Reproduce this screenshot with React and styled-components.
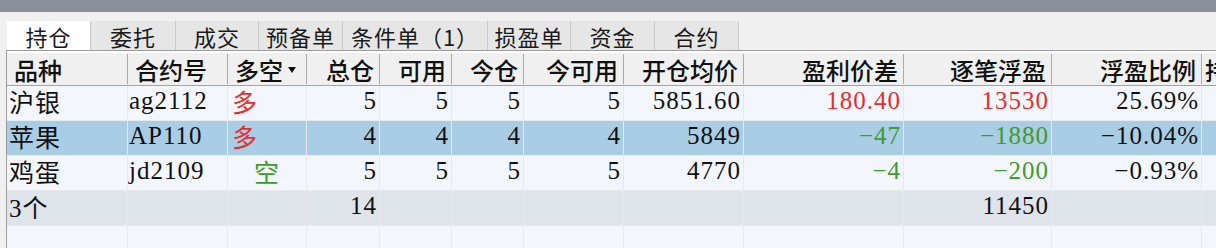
import React from "react"
import styled, { createGlobalStyle } from "styled-components"

const Global = createGlobalStyle`
  html, body {
    margin: 0;
    padding: 0;
    background: #f0f0f0;
    overflow: hidden;
  }
  body {
    font-family: "Liberation Serif", "Noto Sans CJK SC", serif;
  }
`

const RED = "#e3302d"
const GREEN = "#3f9b2c"

const cols = [121, 100, 79, 73, 72, 72, 100, 120, 160, 148, 150, 200]
const gridCols = cols.map((w) => `${w}px`).join(" ")

const Page = styled.div`
  width: 1216px;
  height: 248px;
  overflow: hidden;
  display: flex;
  flex-direction: column;
`

const TopBand = styled.div`
  height: 12px;
  background: #8b9199;
  flex: none;
`

const TabBar = styled.div`
  display: flex;
  padding: 9px 0 0 7px;
  height: 29px;
  flex: none;
`

const Tab = styled.div`
  box-sizing: border-box;
  width: ${(p) => p.$w}px;
  height: 29px;
  display: flex;
  align-items: center;
  justify-content: center;
  font-family: "Noto Sans CJK SC", sans-serif;
  font-size: 22px;
  color: #1a1a1a;
  background: ${(p) => (p.$active ? "#ffffff" : "#e6e6e6")};
  border-right: 1px solid #c9c9c9;
  letter-spacing: 1px;
`

const Table = styled.div`
  margin-left: 6px;
  border-left: 1px solid #9c9c9c;
  border-top: 1px solid #9c9c9c;
  flex: 1;
  background: #f3f7fd;
`

const HeadRow = styled.div`
  display: grid;
  grid-template-columns: ${gridCols};
  border-top: 2px solid #ffffff;
  background: #f0f0f0;
  border-bottom: 1px solid #a3a3a3;
  height: 32px;
`

const HeadCell = styled.div`
  box-sizing: border-box;
  display: flex;
  align-items: center;
  justify-content: ${(p) => (p.$right ? "flex-end" : "flex-start")};
  padding: ${(p) => (p.$right ? "0 6px 0 0" : p.$tight ? "0 0 0 3px" : "0 0 0 7px")};
  font-family: "Noto Sans CJK SC", sans-serif;
  font-size: 24px;
  font-weight: 500;
  color: #111;
  white-space: nowrap;
  overflow: hidden;
  position: relative;
  &::after {
    content: "";
    position: absolute;
    right: 0;
    top: 1px;
    bottom: 1px;
    width: 1px;
    background: #a9a9a9;
  }
`

const SortArrow = styled.span`
  display: inline-block;
  margin-left: 5px;
  margin-top: 2px;
  width: 0;
  height: 0;
  border-left: 4px solid transparent;
  border-right: 4px solid transparent;
  border-top: 6px solid #111;
`

const Row = styled.div`
  display: grid;
  grid-template-columns: ${gridCols};
  height: 35px;
  box-sizing: border-box;
  border-bottom: 1px solid #e9ebee;
  background: ${(p) =>
    p.$kind === "sel" ? "#a9cde4" : p.$kind === "sum" ? "#dfe3ea" : "#f3f7fd"};
`

const Cell = styled.div`
  box-sizing: border-box;
  display: flex;
  align-items: center;
  padding-bottom: 4px;
  justify-content: ${(p) =>
    p.$align === "right" ? "flex-end" : p.$align === "center" ? "center" : "flex-start"};
  padding-left: ${(p) => (p.$align === "left" ? p.$pad || 2 : 0)}px;
  padding-right: ${(p) => (p.$align === "right" ? 2 : 0)}px;
  border-right: 1px solid #e6e8ec;
  font-size: 25px;
  letter-spacing: 1px;
  color: ${(p) => p.$color || "#111"};
  white-space: nowrap;
  overflow: hidden;
`

const headers = [
  { t: "品种" },
  { t: "合约号" },
  { t: "多空", arrow: true },
  { t: "总仓", r: true },
  { t: "可用", r: true },
  { t: "今仓", r: true },
  { t: "今可用", r: true },
  { t: "开仓均价", r: true },
  { t: "盈利价差", r: true },
  { t: "逐笔浮盈", r: true },
  { t: "浮盈比例", r: true },
  { t: "持仓均价", tight: true },
]

const rows = [
  {
    kind: "",
    cells: ["沪银", "ag2112", "多", "5", "5", "5", "5", "5851.60", "180.40", "13530", "25.69%", ""],
    side: "long",
    pnl: RED,
  },
  {
    kind: "sel",
    cells: ["苹果", "AP110", "多", "4", "4", "4", "4", "5849", "−47", "−1880", "−10.04%", ""],
    side: "long",
    pnl: GREEN,
  },
  {
    kind: "",
    cells: ["鸡蛋", "jd2109", "空", "5", "5", "5", "5", "4770", "−4", "−200", "−0.93%", ""],
    side: "short",
    pnl: GREEN,
  },
  {
    kind: "sum",
    cells: ["3个", "", "", "14", "", "", "", "", "", "11450", "", ""],
  },
  { kind: "", cells: ["", "", "", "", "", "", "", "", "", "", "", ""] },
]

const tabs = [
  { t: "持仓", w: 84, active: true },
  { t: "委托", w: 85 },
  { t: "成交", w: 83 },
  { t: "预备单", w: 84 },
  { t: "条件单（1）", w: 145 },
  { t: "损盈单", w: 83 },
  { t: "资金", w: 84 },
  { t: "合约", w: 84 },
]

const cellProps = (row, i) => {
  if (i === 0) return { $align: "left", $pad: 2 }
  if (i === 1) return { $align: "left", $pad: 1 }
  if (i === 2) {
    if (row.side === "short") return { $align: "center", $color: GREEN }
    return { $align: "left", $pad: 4, $color: RED }
  }
  if (i === 8 || i === 9) return { $align: "right", $color: row.pnl }
  if (i === 11) return { $align: "left" }
  return { $align: "right" }
}

export default function App() {
  return (
    <Page>
      <Global />
      <TopBand />
      <TabBar>
        {tabs.map((tab) => (
          <Tab key={tab.t} $w={tab.w} $active={tab.active}>
            {tab.t}
          </Tab>
        ))}
      </TabBar>
      <Table>
        <HeadRow>
          {headers.map((h) => (
            <HeadCell key={h.t} $right={h.r} $tight={h.tight}>
              {h.t}
              {h.arrow && <SortArrow />}
            </HeadCell>
          ))}
        </HeadRow>
        {rows.map((row, ri) => (
          <Row key={ri} $kind={row.kind}>
            {row.cells.map((c, i) => (
              <Cell key={i} {...cellProps(row, i)}>
                {c}
              </Cell>
            ))}
          </Row>
        ))}
      </Table>
    </Page>
  )
}
